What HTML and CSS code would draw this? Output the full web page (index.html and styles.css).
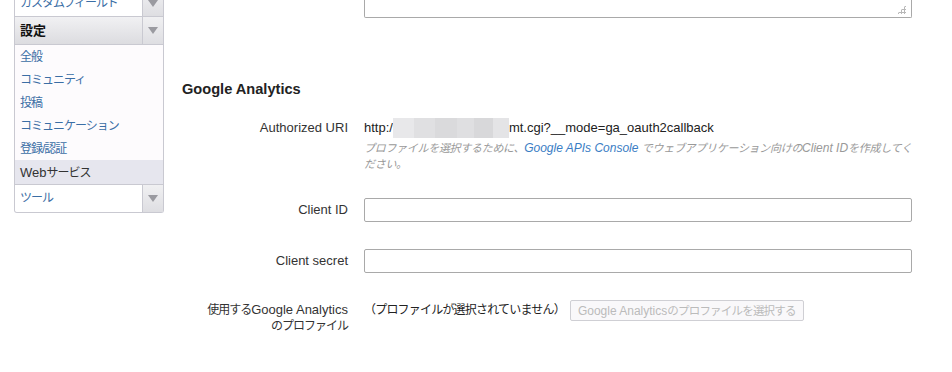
FILE: index.html
```html
<!DOCTYPE html>
<html lang="ja">
<head>
  <meta charset="UTF-8" />
  <title>Webサービス設定</title>
  <link rel="stylesheet" href="styles.css">
</head>
<body>

<div class="page">
  <nav class="sidebar">
    <div class="menu-head plain">
      <span class="menu-title link ja">カスタムフィールド</span>
      <span class="menu-arrow"></span>
    </div>
    <div class="menu-head active">
      <span class="menu-title">設定</span>
      <span class="menu-arrow"></span>
    </div>
    <ul class="menu-items">
      <li class="ja">全般</li>
      <li class="ja">コミュニティ</li>
      <li class="ja">投稿</li>
      <li class="ja">コミュニケーション</li>
      <li class="ja">登録/認証</li>
      <li class="current">Web<span class="ja">サービス</span></li>
    </ul>
    <div class="menu-head plain last">
      <span class="menu-title link ja">ツール</span>
      <span class="menu-arrow"></span>
    </div>
  </nav>

  <main class="content">
    <div class="textarea"><span class="grip"></span></div>

    <h2>Google Analytics</h2>

    <div class="field">
      <div class="label">Authorized URI</div>
      <div class="value">
        <div class="uri">http:/<span class="blur"></span>mt.cgi?__mode=ga_oauth2callback</div>
        <p class="hint"><span class="ja">プロファイルを選択するために、</span><a href="#">Google APIs Console</a> <span class="ja">でウェブアプリケーション向けの</span>Client ID<span class="ja">を作成してください。</span></p>
      </div>
    </div>

    <div class="field input-row">
      <div class="label">Client ID</div>
      <div class="value"><input type="text"></div>
    </div>

    <div class="field input-row">
      <div class="label">Client secret</div>
      <div class="value"><input type="text"></div>
    </div>

    <div class="field profile-row">
      <div class="label multi"><span class="ja">使用する</span>Google Analytics<br><span class="ja">のプロファイル</span></div>
      <div class="value profile">
        <span class="ja note">（プロファイルが選択されていません）</span>
        <button type="button" disabled>Google Analytics<span class="ja">のプロファイルを選択する</span></button>
      </div>
    </div>
  </main>
</div>

</body>
</html>
```

FILE: styles.css
```css
* {
  box-sizing: border-box;
}

body {
  margin: 0;
  background: #fff;
  font-family: 'Liberation Sans', Arial, 'Noto Sans CJK JP', sans-serif;
  font-size: 13px;
  color: #333;
  overflow: hidden;
}

/* Japanese runs: narrower, like the bitmap UI font */
.ja {
  font-size: 12px;
  letter-spacing: -1px;
}

.page {
  display: flex;
  align-items: flex-start;
}

/* sidebar */
.sidebar {
  width: 150px;
  margin-left: 14px;
  margin-top: -10px;
  border: 1px solid #c9c9d1;
  border-top: none;
  border-radius: 0 0 3px 3px;
  background: #fdfbfd;
}

.menu-head {
  display: flex;
  height: 27px;
  border-bottom: 1px solid #c9c9d1;
}

.menu-head.plain {
  background: #fff;
}

.menu-head.active {
  height: 28px;
  background: linear-gradient(#f1f1f3, #dcdce0);
}

.menu-head.last {
  border-top: 1px solid #c9c9d1;
  border-bottom: none;
  height: 28px;
  border-radius: 0 0 3px 3px;
}

.menu-title {
  flex: 1;
  padding-left: 5px;
  line-height: 27px;
}

.menu-head.active .menu-title {
  font-weight: bold;
  color: #111;
}

.link {
  color: #3b6ea5;
}

.menu-arrow {
  width: 21px;
  border-left: 1px solid #c9c9d1;
  background: linear-gradient(#f0f0f2, #dedee2);
  position: relative;
}

.menu-arrow::after {
  content: '';
  position: absolute;
  left: 5px;
  top: 10px;
  border-left: 5px solid transparent;
  border-right: 5px solid transparent;
  border-top: 7px solid #9a9aa0;
}

.menu-items {
  list-style: none;
  margin: 0;
  padding: 0;
}

.menu-items li {
  height: 23px;
  line-height: 25px;
  padding-left: 5px;
  color: #3b6ea5;
}

.menu-items li.current {
  background: #e6e6ee;
  color: #333;
  height: 24px;
}

/* content */
.content {
  margin-left: 18px;
  width: 730px;
}

.textarea {
  position: relative;
  height: 18px;
  margin-left: 182px;
  width: 548px;
  border: 1px solid #a9a9a9;
  border-top: none;
  border-radius: 0 0 2px 2px;
}

.grip {
  position: absolute;
  right: 5px;
  bottom: 3px;
  width: 9px;
  height: 9px;
  background:
    radial-gradient(circle, #b8b8b8 1px, transparent 1.2px) 0 0 / 3px 3px;
  clip-path: polygon(100% 0, 100% 100%, 0 100%);
}

h2 {
  margin: 62px 0 0;
  font-size: 14.6px;
  line-height: 18px;
  color: #222;
}

.field {
  display: flex;
  margin-top: 21px;
}

.label {
  width: 166px;
  text-align: right;
  line-height: 18px;
  color: #333;
}

.value {
  margin-left: 16px;
  width: 548px;
}

.uri {
  line-height: 18px;
  color: #222;
}

.blur {
  display: inline-block;
  vertical-align: middle;
  width: 116px;
  height: 20px;
  margin-top: -2px;
  background: linear-gradient(90deg, #e8e8ea 0 18%, #e0e0e2 18% 36%, #dadadc 36% 55%, #dfdfe1 55% 70%, #d8d8da 70% 86%, #e4e4e6 86%);
}

.hint {
  margin: 2px 0 0;
  font-size: 12px;
  line-height: 16px;
  font-style: italic;
  color: #999;
}

.hint .ja {
  font-size: 11px;
  letter-spacing: -0.3px;
}

.hint a {
  color: #3a7dc4;
  text-decoration: none;
}

.input-row {
  margin-top: 26px;
  align-items: center;
}

.input-row + .input-row {
  margin-top: 27px;
}

input {
  width: 548px;
  height: 24px;
  border: 1px solid #a9a9a9;
  border-radius: 2px;
  font-family: inherit;
  font-size: 13px;
}

.profile-row {
  margin-top: 28px;
}

.label.multi {
  line-height: 16px;
  padding-top: 1px;
}

.profile {
  display: flex;
  align-items: flex-start;
  gap: 5px;
  line-height: 18px;
  color: #222;
}

.profile .note {
  letter-spacing: -0.8px;
}

button {
  height: 21px;
  margin-top: -1px;
  padding: 0 7px;
  border: 1px solid #cfcfd4;
  border-radius: 2px;
  background: #f9f8fa;
  color: #bbb;
  font-family: inherit;
  font-size: 12px;
}

button .ja {
  font-size: 11.5px;
  letter-spacing: -0.8px;
}
```
